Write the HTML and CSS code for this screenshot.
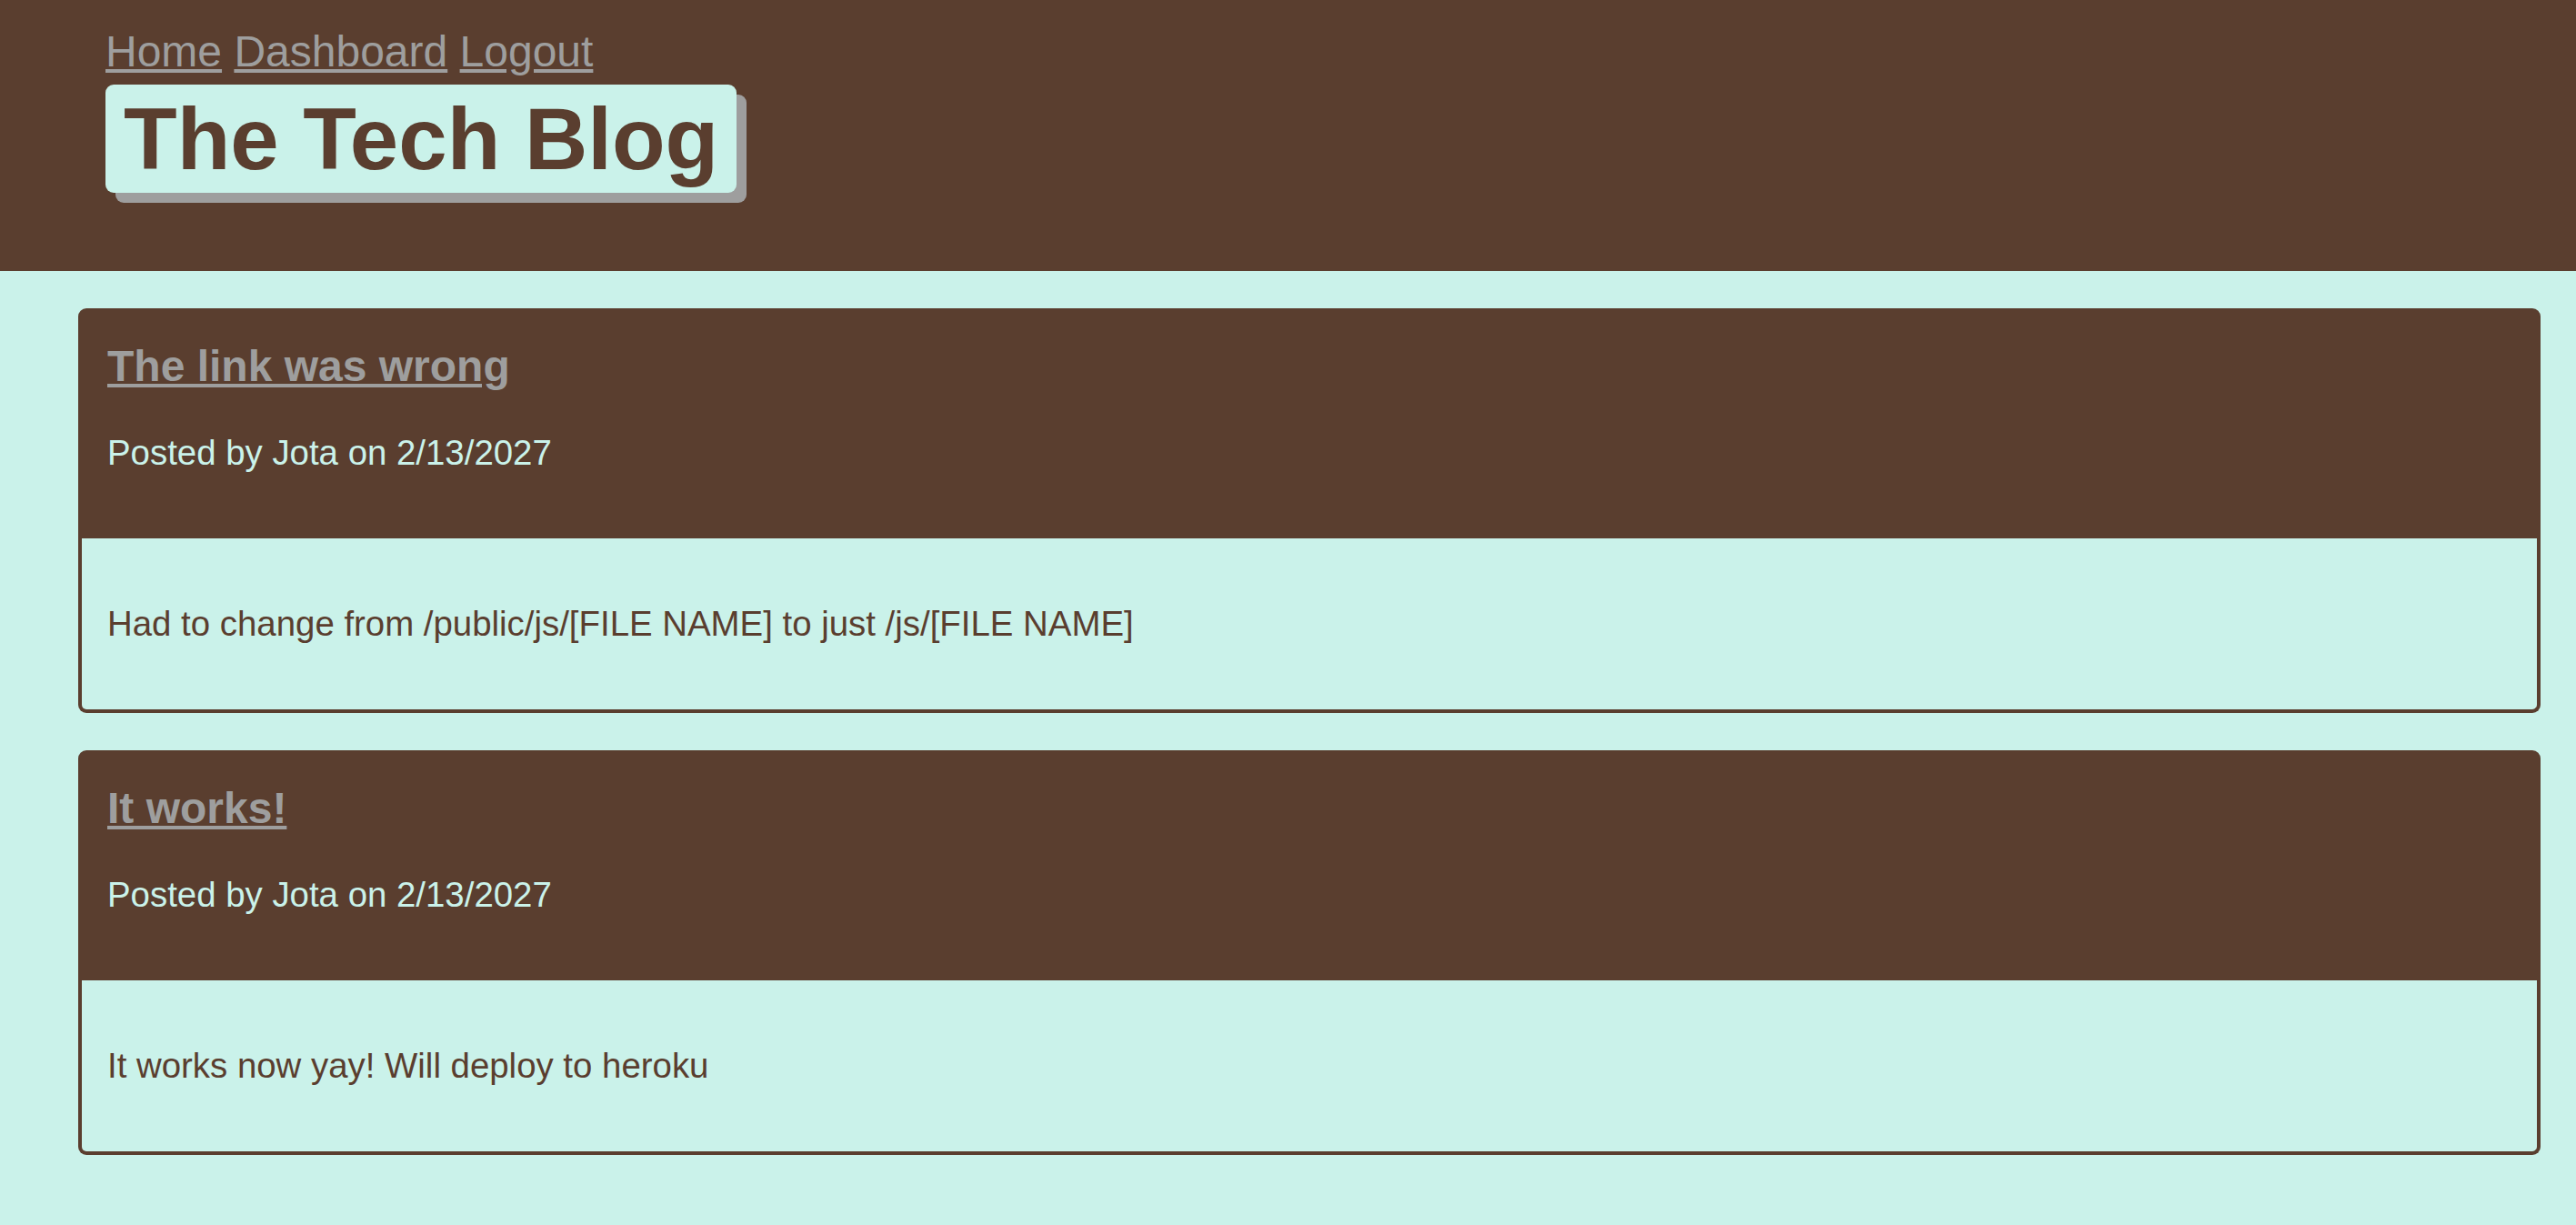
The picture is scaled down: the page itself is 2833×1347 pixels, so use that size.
FILE: index.html
```html
<!DOCTYPE html>
<html lang="en">
<head>
<meta charset="utf-8">
<title>The Tech Blog</title>
<link rel="stylesheet" href="styles.css">
</head>
<body>
<header class="site-header">
  <nav class="site-nav">
    <a href="#">Home</a> <a href="#">Dashboard</a> <a href="#">Logout</a>
  </nav>
  <h1 class="site-title">The Tech Blog</h1>
</header>
<main class="posts">
  <article class="post">
    <div class="post-head">
      <h2 class="post-title"><a href="#">The link was wrong</a></h2>
      <p class="post-meta">Posted by Jota on 2/13/2027</p>
    </div>
    <div class="post-body">
      <p>Had to change from /public/js/[FILE NAME] to just /js/[FILE NAME]</p>
    </div>
  </article>
  <article class="post">
    <div class="post-head">
      <h2 class="post-title"><a href="#">It works!</a></h2>
      <p class="post-meta">Posted by Jota on 2/13/2027</p>
    </div>
    <div class="post-body">
      <p>It works now yay! Will deploy to heroku</p>
    </div>
  </article>
</main>
</body>
</html>
```
FILE: styles.css
```css
html, body {
  margin: 0;
  padding: 0;
}

body {
  background: #caf2ea;
  color: #5a3e2f;
  font-family: "Liberation Sans", Arial, Helvetica, sans-serif;
  font-size: 38.4px;
}

.site-header {
  background: #5a3e2f;
  display: flex;
  flex-direction: column;
  align-items: flex-start;
  padding: 29px 0 86px 116px;
}

.site-nav {
  font-size: 48px;
  line-height: 55px;
}

.site-nav a {
  color: #9e9e9e;
  text-decoration: underline;
}

.site-title {
  margin: 9px 0 0;
  background: #caf2ea;
  color: #5a3e2f;
  font-size: 96px;
  font-weight: bold;
  line-height: 107px;
  padding: 6px 20px;
  border-radius: 9px;
  box-shadow: 11px 11px 0 #9e9e9e;
}

.posts {
  display: flex;
  flex-direction: column;
  gap: 41px;
  padding: 41px 39px 41px 86px;
}

.post-head {
  background: #5a3e2f;
  border-radius: 9px 9px 0 0;
  padding: 36px 32px 72px;
}

.post-title {
  margin: 0;
  font-size: 48px;
  line-height: 56px;
  font-weight: bold;
}

.post-title a {
  color: #9e9e9e;
  text-decoration: underline;
}

.post-meta {
  margin: 45px 0 0;
  color: #caf2ea;
  line-height: 44px;
}

.post-body {
  border: 4px solid #5a3e2f;
  border-top: none;
  border-radius: 0 0 9px 9px;
  padding: 72px 28px 72px;
}

.post-body p {
  margin: 0;
  line-height: 44px;
}
```
